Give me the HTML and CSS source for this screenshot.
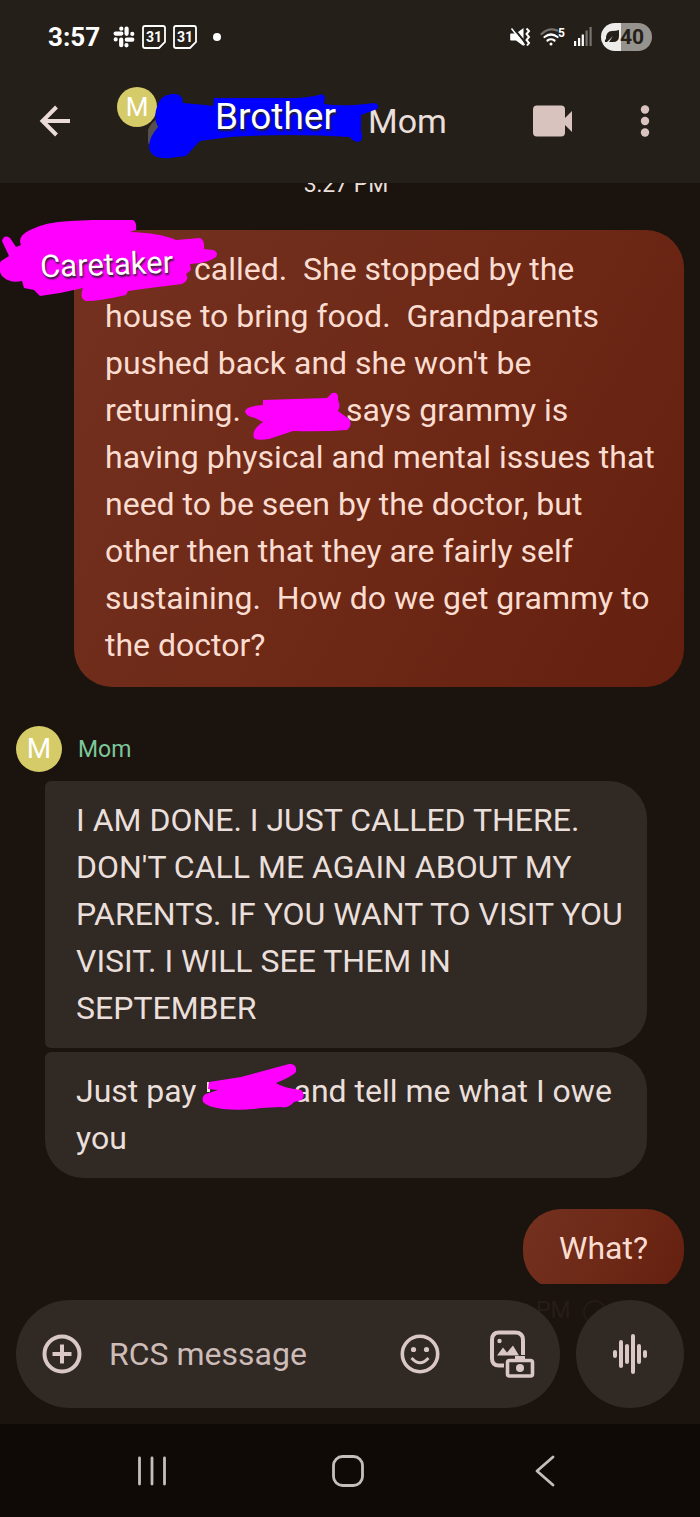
FILE: index.html
```html
<!DOCTYPE html>
<html lang="en">
<head>
<meta charset="utf-8">
<meta name="viewport" content="width=device-width, initial-scale=1">
<title>Messages</title>
<link rel="stylesheet" href="styles.css">
</head>
<body>
<header class="top">
  <div class="status">
    <time class="clock">3:57</time>
    <svg class="slack" width="22" height="22" viewBox="0 0 22 22" fill="none" stroke="#fff" stroke-width="4.2" stroke-linecap="round"><path d="M8.3 2.6v.1M8.3 7.6H2.6M13.6 2.6v5.2M19.3 7.9v.1M13.8 13.7h5.5M2.7 13.4v.1M8.2 13.6v5.6M13.5 19.2v.1"/></svg>
    <span class="calendar"><svg width="24" height="24" viewBox="0 0 24 24" fill="none" stroke="#fff" stroke-width="1.8"><path d="M3 1h18q2 0 2 2v14l-6 6H3q-2 0-2-2V3q0-2 2-2z"/></svg><span class="calendar-day">31</span></span>
    <span class="calendar"><svg width="24" height="24" viewBox="0 0 24 24" fill="none" stroke="#fff" stroke-width="1.8"><path d="M3 1h18q2 0 2 2v14l-6 6H3q-2 0-2-2V3q0-2 2-2z"/></svg><span class="calendar-day">31</span></span>
    <span class="dot"></span>
    <span class="status-right">
      <svg width="21" height="20" viewBox="0 0 21 20"><path d="M1 6.5h5L13.5 1v18L6 13.5H1q-.8 0-.8-.8V7.3q0-.8.8-.8z" fill="#fff"/><path d="M2.500 0l14 17" stroke="#251f1a" stroke-width="2"/><path d="M1.500 1.500l13 16.500" stroke="#fff" stroke-width="1.500"/><path d="M16.500 1.500l2.500 2.500-2.500 3 2.500 3-2.500 3 2.500 3-2 2.500" stroke="#fff" stroke-width="2" fill="none"/></svg>
      <span class="wifi"><svg width="22" height="18" viewBox="0 0 22 18" fill="none" stroke-linecap="round" stroke-width="2.200"><path d="M1.500 6Q9 -1 17 2.500" stroke="#77726e"/><path d="M4.500 9q6.500-5 13 0M7.500 12.500q3.500-2.500 7 0" stroke="#fff"/><circle cx="11" cy="16" r="1.500" fill="#fff"/></svg><span class="wifi-gen">5</span></span>
      <svg class="signal" width="18" height="19" viewBox="0 0 18 19"><path d="M0 14h2.200v5H0zM4 11h2.200v8H4zM7.700 7.500h2.200V19H7.700z" fill="#fff"/><path d="M11.500 3.500h2.200V19h-2.200zM15.500 0h2.200v19h-2.200z" fill="#77726e"/></svg>
      <span class="battery"><svg width="14" height="13" viewBox="0 0 14 13"><path d="M14 0v6q0 6-6 6H4l4-6-6 6H0v-2l1-1Q1 1 7 1q4 0 7-1z" fill="#251f1a"/></svg>40</span>
    </span>
  </div>
  <div class="appbar">
    <button class="icon-button back" aria-label="Back"><svg width="32" height="32" viewBox="0 0 32 32" fill="none" stroke="#eadbd6" stroke-width="4"><path d="M31 16H4M17.500 2L3.500 16l14 14"/></svg></button>
    <div class="conversation">
      <span class="avatar avatar-small">M</span>
      <span class="hidden-name brother">
        <svg width="233" height="66" viewBox="148 94 233 66"><circle cx="166" cy="137" r="19" fill="#55504d"/><path d="M157 108Q160 96 172 95Q183 94 183 104L205 106L213 107L214 99L296 99Q314 98 322 95L325 98L324 105Q345 108 374 104Q381 106 377 110L361 116L361 132Q364 142 358 143Q352 142 350 138Q290 134 230 138L200 142L186 157Q177 158 170 159Q151 161 149 148Q149 138 158 128Q153 118 157 108Z" fill="#00f"/></svg>
        <span class="hidden-label">Brother</span>
      </span>
      <h1 class="name">Mom</h1>
    </div>
    <button class="icon-button video" aria-label="Video call"><svg width="40" height="32" viewBox="0 0 40 32" fill="#d9c3bf"><rect y="0.500" width="32" height="31" rx="4"/><path d="M31 14l8-8v21l-8-8z"/></svg></button>
    <button class="icon-button" aria-label="More options"><svg width="10" height="32" viewBox="0 0 10 32" fill="#d9c3bf"><circle cx="5" cy="4.500" r="4.200"/><circle cx="5" cy="16" r="4.200"/><circle cx="5" cy="27.500" r="4.200"/></svg></button>
  </div>
</header>

<main class="thread">
  <time class="timestamp">3:27 PM</time>
  <div class="bubble outgoing"><span class="redact redact-start"><svg class="ink ink-start" width="218" height="82" viewBox="0 220 218 82"><path d="M2 241Q4 234 10 238L16 247L21 245Q17 236 30 230Q45 222 70 221Q105 219 133 220Q137 222 136 230L130 232Q160 233 176 240L200 238Q205 240 204 249L213 250Q219 252 216 257Q208 263 190 264L191 270L186 274Q190 280 182 284L150 288L128 291L126 295Q100 301 86 301Q79 299 83 288L60 293L40 296L34 290L24 288L22 281Q10 284 2 276Q-3 268 1 261L9 256Z" fill="#f0f"/></svg><span class="hidden-label caretaker">Caretaker</span></span>called.&nbsp; She stopped by the<br>house to bring food.&nbsp; Grandparents<br>pushed back and she won't be<br>returning.<span class="redact redact-middle"><svg class="ink ink-middle" width="108" height="50" viewBox="243 391 108 50"><path d="M244 411Q246 406 262 405L262 400L326 398L331 393Q338 391 337 400Q340 406 337 411L348 419Q352 425 346 430Q320 432 292 431L268 439Q256 441 253 438Q250 430 262 422L254 418Q244 416 244 411Z" fill="#f0f"/></svg></span>says grammy is<br>having physical and mental issues that<br>need to be seen by the doctor, but<br>other then that they are fairly self<br>sustaining.&nbsp; How do we get grammy to<br>the doctor?</div>

  <div class="sender"><span class="avatar">M</span><span class="sender-name">Mom</span></div>
  <div class="bubble incoming">I AM DONE. I JUST CALLED THERE.<br>DON'T CALL ME AGAIN ABOUT MY<br>PARENTS. IF YOU WANT TO VISIT YOU<br>VISIT. I WILL SEE THEM IN<br>SEPTEMBER</div>
  <div class="bubble incoming incoming-last">Just pay<span class="redact redact-pay"><svg class="ink ink-pay" width="103" height="48" viewBox="201 1061 103 48"><path d="M206 1080h3v10h-3z" fill="#eadfda"/><path d="M208 1080L240 1075L288 1062Q296 1061 295 1070Q292 1074 275 1081Q282 1086 300 1088Q305 1092 301 1098L293 1100Q287 1107 280 1105L260 1106Q240 1109 222 1107Q206 1105 202 1100Q200 1092 208 1091L217 1088L207 1087Z" fill="#f0f"/></svg></span>and tell me what I owe<br>you</div>
  <div class="bubble outgoing outgoing-short">What?</div>
</main>

<form class="composer">
  <span class="fading-time">PM &nbsp;&#9711;</span>
  <div class="field">
    <button type="button" class="icon-button" aria-label="Add attachment"><svg width="40" height="40" viewBox="0 0 40 40" fill="none" stroke="#d9c8c3" stroke-width="4"><circle cx="20" cy="20" r="17.500"/><path d="M20 10.500v19M10.500 20h19"/></svg></button>
    <input class="message" type="text" placeholder="RCS message" aria-label="RCS message">
    <button type="button" class="icon-button" aria-label="Emoji"><svg width="40" height="40" viewBox="0 0 40 40" fill="none" stroke="#d9c8c3"><circle cx="20" cy="20" r="17.700" stroke-width="3.600"/><g fill="#d9c8c3" stroke="none"><circle cx="13.500" cy="15.500" r="2.600"/><circle cx="26.500" cy="15.500" r="2.600"/></g><path d="M11.500 24q8.500 9.500 17 0" stroke-width="2.800"/></svg></button>
    <button type="button" class="icon-button gallery" aria-label="Gallery and camera"><svg width="46" height="48" viewBox="0 0 46 48" fill="none" stroke="#d9c8c3"><path d="M15 35.500h-5Q3 35.500 3 28.500V10Q3 2.500 10 2.500h16q8 0 8 7.500v15" stroke-width="4"/><circle cx="10.500" cy="11" r="2.200" fill="#d9c8c3" stroke="none"/><path d="M8 25.500l6-8 4 5 6-7 6 10z" fill="#d9c8c3" stroke="none"/><rect x="18.500" y="30.500" width="25" height="15.500" rx="2" fill="#302924" stroke-width="3.600"/><path d="M26 26h10v4H26z" fill="#d9c8c3" stroke="none"/><circle cx="31" cy="38" r="4" fill="#d9c8c3" stroke="none"/></svg></button>
  </div>
  <button type="button" class="voice" aria-label="Record voice message"><svg width="34" height="40" viewBox="0 0 34 40" fill="none" stroke="#d9c8c3" stroke-width="4" stroke-linecap="round"><path d="M2 18v4M8 8v24M14 12v16M20 2v36M26 12v16M32 18v4"/></svg></button>
</form>

<nav class="system-nav">
  <button class="icon-button" aria-label="Recent apps"><svg width="30" height="30" viewBox="0 0 30 30" stroke="#c5bfbb" stroke-width="2.800" stroke-linecap="round"><path d="M2.500 2v26M15 2v26M27.500 2v26"/></svg></button>
  <button class="icon-button" aria-label="Home"><svg width="32" height="32" viewBox="0 0 32 32" fill="none" stroke="#c5bfbb" stroke-width="2.800"><rect x="1.500" y="1.500" width="29" height="29" rx="9"/></svg></button>
  <button class="icon-button" aria-label="Back"><svg width="20" height="32" viewBox="0 0 20 32" fill="none" stroke="#c5bfbb" stroke-width="2.800" stroke-linecap="round" stroke-linejoin="round"><path d="M18 2L2 16l16 14"/></svg></button>
</nav>
</body>
</html>
```
FILE: styles.css
```css
* { box-sizing: border-box; }

body {
  margin: 0;
  min-height: 100vh;
  display: flex;
  flex-direction: column;
  background: #1a130e;
  color: #eadfda;
  font-family: Roboto, "Liberation Sans", sans-serif;
  font-size: 32px;
}

svg { display: block; flex: none; }

.icon-button {
  padding: 0;
  border: 0;
  background: none;
  display: flex;
  align-items: center;
  justify-content: center;
}

/* Header */
.top {
  background: #251f1a;
  padding-bottom: 14px;
}

.status {
  height: 73px;
  padding: 0 48px;
  display: flex;
  align-items: center;
  color: #fff;
}

.clock { font-size: 26px; font-weight: 700; }
.slack { margin-left: 13px; }
.calendar { position: relative; margin-left: 7px; }
.calendar-day {
  position: absolute;
  inset: 0;
  text-align: center;
  font-size: 14px;
  line-height: 24px;
  font-weight: 700;
}
.dot {
  width: 8px;
  height: 8px;
  margin-left: 16px;
  border-radius: 50%;
  background: #fff;
}

.status-right {
  margin-left: auto;
  display: flex;
  align-items: center;
  gap: 9px;
}
.wifi { display: flex; align-items: center; }
.wifi-gen {
  margin-left: -4px;
  align-self: flex-start;
  font-size: 12px;
  line-height: 10px;
  font-weight: 700;
}
.battery {
  width: 51px;
  height: 28px;
  padding-left: 4px;
  display: flex;
  align-items: center;
  gap: 1px;
  border-radius: 14px;
  background: linear-gradient(90deg, #eeecea 40%, #96928d 40%);
  color: #251f1a;
  font-size: 21px;
  font-weight: 700;
}

.appbar {
  height: 96px;
  padding: 0 50px 0 39px;
  display: flex;
  align-items: center;
}
.back { margin-right: 46px; }
.video { margin-right: 67px; }

.conversation {
  flex: 1;
  height: 96px;
  display: flex;
  align-items: center;
}

.avatar {
  width: 46px;
  height: 46px;
  border-radius: 50%;
  background: #d5cb68;
  color: #fff;
  font-size: 28px;
  line-height: 46px;
  text-align: center;
}
.avatar-small {
  width: 40px;
  height: 40px;
  margin-top: 14px;
  align-self: flex-start;
  position: relative;
  z-index: 1;
  font-size: 26px;
  line-height: 40px;
}

.name {
  margin: 0;
  font-size: 34px;
  font-weight: 400;
}

.hidden-name {
  position: relative;
  width: 211px;
  height: 66px;
}
.hidden-name svg { position: absolute; left: -9px; top: 5px; z-index: 1; }
.hidden-label {
  position: absolute;
  z-index: 2;
  color: #fff;
  text-shadow: 1px 2px 2px #222;
  white-space: nowrap;
}
.brother .hidden-label {
  left: 58px;
  top: 8px;
  font-size: 37px;
  line-height: 42px;
}

/* Messages */
.thread {
  flex: 1;
  display: flex;
  flex-direction: column;
  overflow: hidden;
}

.timestamp {
  margin: -11px 0 33px;
  padding-right: 8px;
  text-align: center;
  font-size: 23px;
  line-height: 25px;
}

.bubble {
  padding: 16px 16px 16px 31px;
  border-radius: 38px;
  line-height: 47px;
}
.outgoing {
  margin: 0 16px 0 74px;
  padding: 16px 16px 18px 31px;
  background: linear-gradient(120deg, #74311f, #6e2917 50%, #641f0e);
  color: #fbdcd0;
}
.outgoing-short {
  align-self: flex-end;
  margin-top: 31px;
  margin-bottom: -6px;
  padding-left: 36px;
  padding-right: 36px;
}
.incoming {
  margin: 0 53px 0 45px;
  background: #302924;
  border-radius: 6px 38px 38px 6px;
}
.incoming-last {
  margin-top: 4px;
  border-radius: 6px 38px 38px 38px;
}

.sender {
  margin: 39px 16px 9px;
  display: flex;
  align-items: center;
  gap: 16px;
}
.sender-name { color: #7dc79a; font-size: 23px; }

.redact { position: relative; display: inline-block; }
.redact-start { width: 89px; }
.redact-middle { width: 105px; }
.redact-pay { width: 97px; }
.ink { position: absolute; z-index: 1; }
.ink-start { left: -105px; bottom: -22px; }
.ink-middle { left: 3px; bottom: -20px; }
.ink-pay { left: 5px; bottom: -9px; }
.caretaker {
  left: -65px;
  bottom: -8px;
  font-size: 31px;
  line-height: 47px;
  transform: rotate(-2deg);
}

/* Composer */
.composer {
  position: relative;
  padding: 16px;
  display: flex;
  gap: 16px;
}
.fading-time {
  position: absolute;
  right: 92px;
  top: 14px;
  font-size: 23px;
  line-height: 25px;
  color: #261d18;
}
.field {
  position: relative;
  flex: 1;
  min-width: 0;
  height: 108px;
  padding: 0 25px 0 26px;
  display: flex;
  align-items: center;
  border-radius: 54px;
  background: #302924;
}
.message {
  flex: 1;
  min-width: 0;
  margin: 0 16px 0 27px;
  padding: 0;
  border: 0;
  outline: 0;
  background: none;
  color: #eadfda;
  font: inherit;
}
.message::placeholder { color: #cdbcb7; opacity: 1; }
.gallery { margin-left: 49px; }
.voice {
  position: relative;
  width: 108px;
  height: 108px;
  padding: 0;
  border: 0;
  border-radius: 50%;
  background: #302924;
  display: flex;
  align-items: center;
  justify-content: center;
}

/* System navigation */
.system-nav {
  height: 93px;
  padding: 0 57px 0 54px;
  display: grid;
  grid-template-columns: repeat(3, 1fr);
  background: #0f0a06;
}
```
